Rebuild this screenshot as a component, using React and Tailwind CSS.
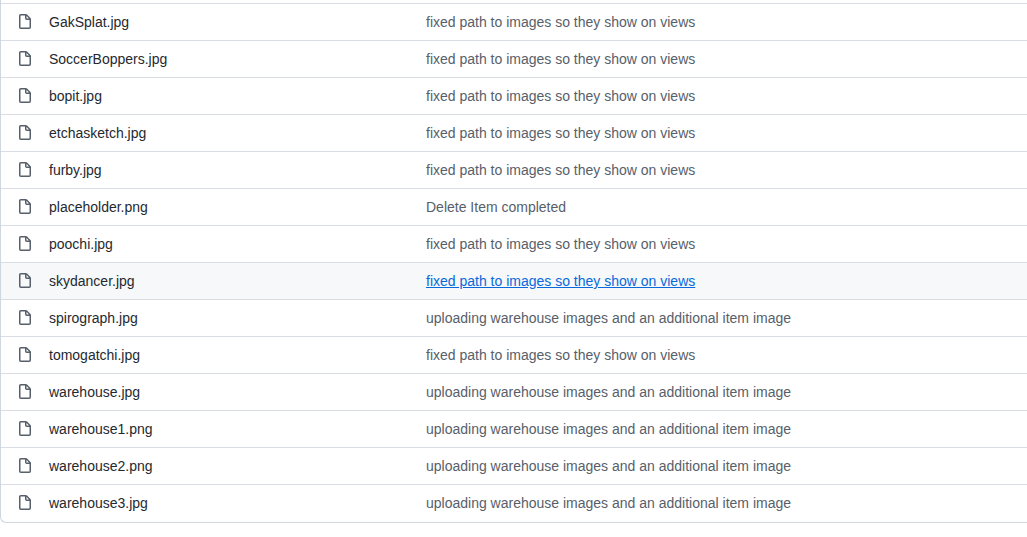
const FIXED = 'fixed path to images so they show on views';
const UPLOAD = 'uploading warehouse images and an additional item image';

const files = [
  ['GakSplat.jpg', FIXED],
  ['SoccerBoppers.jpg', FIXED],
  ['bopit.jpg', FIXED],
  ['etchasketch.jpg', FIXED],
  ['furby.jpg', FIXED],
  ['placeholder.png', 'Delete Item completed'],
  ['poochi.jpg', FIXED],
  ['skydancer.jpg', FIXED],
  ['spirograph.jpg', UPLOAD],
  ['tomogatchi.jpg', FIXED],
  ['warehouse.jpg', UPLOAD],
  ['warehouse1.png', UPLOAD],
  ['warehouse2.png', UPLOAD],
  ['warehouse3.jpg', UPLOAD],
];

const ACTIVE = 'skydancer.jpg';

function FileIcon() {
  return (
    <svg viewBox="0 0 16 16" className="block size-4 fill-[#57606a]" aria-hidden="true">
      <path
        fillRule="evenodd"
        d="M3.75 1.5a.25.25 0 00-.25.25v11.5c0 .138.112.25.25.25h8.5a.25.25 0 00.25-.25V6H9.75A1.75 1.75 0 018 4.25V1.5H3.75zm5.75.56v2.19c0 .138.112.25.25.25h2.19L9.5 2.06zM2 1.75C2 .784 2.784 0 3.75 0h5.086c.464 0 .909.184 1.237.513l3.414 3.414c.329.328.513.773.513 1.237v8.086A1.75 1.75 0 0112.25 15h-8.5A1.75 1.75 0 012 13.25V1.75z"
      />
    </svg>
  );
}

function FileRow({ name, message, active }) {
  return (
    <tr className={active ? 'bg-[#f6f8fa]' : 'hover:bg-[#f6f8fa]'}>
      <td className="h-[37px] w-12 border-t border-[#d8dee4] pl-4">
        <FileIcon />
      </td>
      <td className="w-[377px] border-t border-[#d8dee4] p-0">
        <a href="#file" className="text-[#24292f]">{name}</a>
      </td>
      <td className="border-t border-[#d8dee4] p-0">
        <a href="#commit" className={active ? 'text-[#0969da] underline' : 'text-[#57606a]'}>
          {message}
        </a>
      </td>
    </tr>
  );
}

export default function App() {
  return (
    <main className="bg-white font-['Liberation_Sans',Arial,sans-serif] text-sm/5">
      <div className="overflow-hidden rounded-bl-md border-b border-l border-[#d0d7de] pt-[3px] pb-px">
        <table className="w-full table-fixed border-separate border-spacing-0 whitespace-nowrap">
          <tbody>
            {files.map(([name, message]) => (
              <FileRow key={name} name={name} message={message} active={name === ACTIVE} />
            ))}
          </tbody>
        </table>
      </div>
    </main>
  );
}
